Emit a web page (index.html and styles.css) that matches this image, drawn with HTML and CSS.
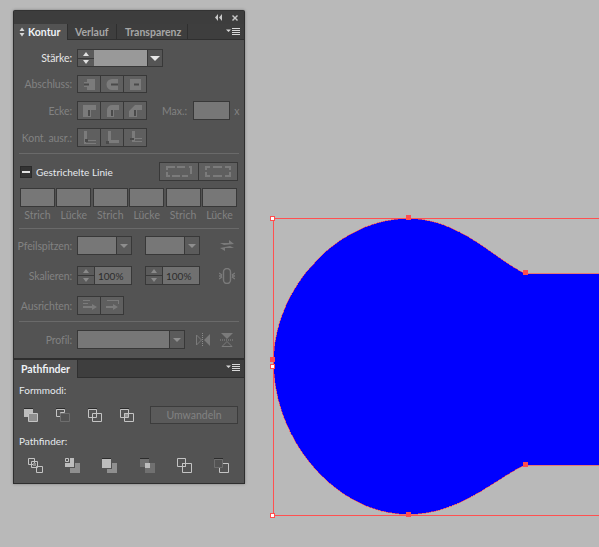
FILE: index.html
```html
<!DOCTYPE html>
<html lang="de">
<head>
    <meta charset="UTF-8">
    <title>Kontur</title>
    <link rel="stylesheet" href="styles.css">
</head>
<body>
    <!-- artboard -->
    <svg class="artboard" width="599" height="547" viewBox="0 0 599 547">
        <path class="bulb" d="M273.5 362C273.500 288 338 218.500 408 218.500C460 218.500 494 259 525 273.500H600V465H525C494 479.500 460 514.500 408 514.500C338 514.500 273.500 442 273.500 362Z"/>
        <path class="bbox" d="M600 218.500H273.500V515.500H600"/>
        <rect class="node" x="406" y="215" width="5" height="5"/>
        <rect class="node" x="523" y="270" width="5" height="5"/>
        <rect class="node" x="523" y="462" width="5" height="5"/>
        <rect class="node" x="406" y="512" width="5" height="5"/>
        <rect class="node" x="270" y="357" width="5" height="5"/>
        <rect class="handle" x="270.5" y="216.5" width="4" height="4"/>
        <rect class="handle" x="270.5" y="364.5" width="4" height="4"/>
        <rect class="handle" x="270.5" y="513.5" width="4" height="4"/>
    </svg>

    <div class="panel">
        <div class="titlebar">
            <svg width="7" height="7" viewBox="0 0 7 7"><path d="M3 0v7L0 3.500zM7 0v7L4 3.500z"/></svg>
            <svg class="close" width="6" height="6" viewBox="0 0 6 6"><path d="M0 1l1-1 2 2 2-2 1 1-2 2 2 2-1 1-2-2-2 2-1-1 2-2z"/></svg>
        </div>

        <div class="tabs">
            <div class="tab active kontur">
                <svg class="updown" width="6" height="10" viewBox="0 0 6 10"><path d="M3 .5L5.500 4H.5zM3 9.500L.5 6h5z"/></svg>
                Kontur
            </div>
            <div class="tab verlauf">Verlauf</div>
            <div class="tab transparenz">Transparenz</div>
            <svg class="menu" width="14" height="8" viewBox="0 0 14 8"><path d="M0 1.500h5L2.500 4z"/><path d="M6 0h8v1H6zM6 2h8v1H6zM6 4h8v1H6zM6 6h8v1H6z"/></svg>
        </div>

        <div class="body">
            <div class="row first">
                <label class="lbl on">Stärke:</label>
                <div class="combo">
                    <div class="spin on"><span class="up"></span><span class="down"></span></div>
                    <div class="field light"></div>
                    <div class="drop on"></div>
                </div>
            </div>

            <div class="row">
                <label class="lbl">Abschluss:</label>
                <div class="group">
                    <div class="cell"><svg width="21" height="17" viewBox="0 0 21 17"><path class="g" d="M8 3h8v11H8v-3H5V6h3z"/><path class="d" d="M5 7.500h5v2H5z"/></svg></div>
                    <div class="cell"><svg width="21" height="17" viewBox="0 0 21 17"><path class="g" d="M10 3h6v11h-6a5.500 5.500 0 0 1 0-11z"/><path class="d" d="M9 7.500h7v2H9z"/></svg></div>
                    <div class="cell"><svg width="21" height="17" viewBox="0 0 21 17"><path class="g" d="M5 3h11v11H5z"/><path class="d" d="M9 7.500h5v2H9z"/></svg></div>
                </div>
            </div>

            <div class="row tall">
                <label class="lbl">Ecke:</label>
                <div class="group">
                    <div class="cell"><svg width="21" height="17" viewBox="0 0 21 17"><path class="g" d="M4 3h13v5h-5v7H4z"/><path class="d" d="M9 8h2v6H9z"/></svg></div>
                    <div class="cell"><svg width="21" height="17" viewBox="0 0 21 17"><path class="g" d="M10 3h7v5h-5v7H5V8a5 5 0 0 1 5-5z"/><path class="d" d="M9 8h2v6H9z"/></svg></div>
                    <div class="cell"><svg width="21" height="17" viewBox="0 0 21 17"><path class="g" d="M10 3h7v5h-5v7H4V9z"/><path class="d" d="M9 8h2v6H9z"/></svg></div>
                </div>
                <label class="lbl-max">Max.:</label>
                <div class="field max"></div>
                <span class="unit">x</span>
            </div>

            <div class="row tall">
                <label class="lbl">Kont. ausr.:</label>
                <div class="group">
                    <div class="cell"><svg width="21" height="17" viewBox="0 0 21 17"><path class="g" d="M5 2h3v9h9v1H7v2h10v1H5z"/><path class="d" d="M6 10h3v3H6z"/></svg></div>
                    <div class="cell"><svg width="21" height="17" viewBox="0 0 21 17"><path class="g" d="M6 2h3v9h8v3H6z"/><path class="d" d="M4 12h3v3H4z"/></svg></div>
                    <div class="cell"><svg width="21" height="17" viewBox="0 0 21 17"><path class="g" d="M7 2h3v7h7v1h-7v2h7v1H7z"/><path class="d" d="M5 9h4v2H5z"/></svg></div>
                </div>
            </div>

            <hr class="sep">

            <div class="row tall dash-row">
                <span class="check"></span>
                <label class="dash-lbl">Gestrichelte Linie</label>
                <div class="group dash-group">
                    <div class="cell wide"><svg width="36" height="17" viewBox="0 0 36 17"><path class="g" d="M6 3h8v2H6zM16 3h8v2h-8zM28 3h3v8h-2V5h-1zM5 3h2v4H5zM5 9h2v5H5zM7 12h2v2H7zM11 12h8v2h-8zM21 12h6v2h-6z"/></svg></div>
                    <div class="cell wide"><svg width="36" height="17" viewBox="0 0 36 17"><path class="g" d="M5 3h5v2H7v2H5zM13 3h9v2h-9zM25 3h6v4h-2V5h-4zM5 9h2v3h3v2H5zM13 12h9v2h-9zM29 9h2v5h-6v-2h4z"/></svg></div>
                </div>
            </div>

            <div class="dash-grid">
                <div class="dash-col"><div class="field"></div><span>Strich</span></div>
                <div class="dash-col"><div class="field"></div><span>Lücke</span></div>
                <div class="dash-col"><div class="field"></div><span>Strich</span></div>
                <div class="dash-col"><div class="field"></div><span>Lücke</span></div>
                <div class="dash-col"><div class="field"></div><span>Strich</span></div>
                <div class="dash-col"><div class="field"></div><span>Lücke</span></div>
            </div>

            <hr class="sep sep-b">

            <div class="row tall arrow-row">
                <label class="lbl">Pfeilspitzen:</label>
                <div class="combo short"><div class="field"></div><div class="drop"></div></div>
                <div class="combo short next"><div class="field"></div><div class="drop"></div></div>
                <svg class="side" width="16" height="14" viewBox="0 0 16 14"><path class="g" d="M1 4h9V1l5 4-10 1zM15 9H6v3L1 9l10-2z"/></svg>
            </div>

            <div class="row tall gap11">
                <label class="lbl">Skalieren:</label>
                <div class="combo short">
                    <div class="spin"><span class="up"></span><span class="down"></span></div>
                    <div class="field value">100%</div>
                </div>
                <div class="combo short next">
                    <div class="spin"><span class="up"></span><span class="down"></span></div>
                    <div class="field value">100%</div>
                </div>
                <svg class="side link" width="16" height="16" viewBox="0 0 16 16"><path class="s" d="M4.500 6V4a3.500 3.500 0 0 1 7 0v2M4.500 10v2a3.500 3.500 0 0 0 7 0v-2M4.500 6v4M11.500 6v4M0 5l3 2M0 11l3-2M16 5l-3 2M16 11l-3-2M0 8h3M13 8h3"/></svg>
            </div>

            <div class="row tall gap11">
                <label class="lbl">Ausrichten:</label>
                <div class="group">
                    <div class="cell"><svg width="21" height="17" viewBox="0 0 21 17"><path class="g" d="M4 3h7v1H4zM4 6h5v1H4zM4 9h9V7l5 3-5 3v-2H4z"/></svg></div>
                    <div class="cell"><svg width="21" height="17" viewBox="0 0 21 17"><path class="g" d="M5 3h12v1H5zM16 4h1v3h-1zM4 9h7V7l5 3-5 3v-2H4z"/></svg></div>
                </div>
            </div>

            <hr class="sep sep-c">

            <div class="row tall profile-row">
                <label class="lbl">Profil:</label>
                <div class="combo long"><div class="field"></div><div class="drop"></div></div>
                <svg class="flip" width="14" height="14" viewBox="0 0 14 14"><path class="s-thin" d="M.5 2l5 5-5 5z"/><path class="g" d="M14 1L8 7l6 6z"/><path class="dots" d="M6.500 0v14"/></svg>
                <svg class="flip flip-b" width="14" height="14" viewBox="0 0 14 14"><path class="g" d="M1 0h12L7 6z"/><path class="s-thin" d="M2 13.500l5-5 5 5z"/><path class="dots" d="M0 7h14"/></svg>
            </div>
        </div>

        <div class="tabs tabs-b">
            <div class="tab active pathfinder">Pathfinder</div>
            <svg class="menu" width="14" height="8" viewBox="0 0 14 8"><path d="M0 1.500h5L2.500 4z"/><path d="M6 0h8v1H6zM6 2h8v1H6zM6 4h8v1H6zM6 6h8v1H6z"/></svg>
        </div>

        <div class="finder">
            <div class="head">Formmodi:</div>
            <div class="modes">
                <div class="mode"><svg width="14" height="14" viewBox="0 0 14 14"><path class="top" d="M0 0h9v1H0z"/><path class="f1" d="M0 1h9v8H0z"/><path class="f2" d="M4 5h9v8H4z"/><path class="o" d="M4.500 5.500h9v8h-9z"/></svg></div>
                <div class="mode"><svg width="14" height="14" viewBox="0 0 14 14"><path class="top" d="M0 0h9v1H0z"/><path class="o" d="M.5 1.500h8v3h-4v4h-4z"/><path class="od" d="M4.500 5.500h9v8h-9z"/></svg></div>
                <div class="mode"><svg width="14" height="14" viewBox="0 0 14 14"><path class="top" d="M0 0h9v1H0z"/><path class="o" d="M.5 1.500h8v8h-8zM4.500 5.500h9v8h-9z"/></svg></div>
                <div class="mode"><svg width="14" height="14" viewBox="0 0 14 14"><path class="top" d="M0 0h9v1H0z"/><path class="f2" d="M4 5h5v4H4z"/><path class="o" d="M.5 1.500h8v8h-8zM4.500 5.500h9v8h-9z"/></svg></div>
                <button class="convert">Umwandeln</button>
            </div>
            <div class="head head-b">Pathfinder:</div>
            <div class="finders">
                <div><svg width="15" height="15" viewBox="0 0 15 15"><path class="o" d="M.5.500h6v6h-6zM3.500 3.500h6v6h-6zM8.500 8.500h6v6h-6z"/><path class="f2" d="M5 5h3v3H5z"/></svg></div>
                <div><svg width="15" height="15" viewBox="0 0 15 15"><path class="f1" d="M5 0h4v5H5zM0 5h9v4H0z"/><path class="f2" d="M10 5h5v10H5v-5h5z"/><path class="o" d="M.5.500h3v3h-3z"/></svg></div>
                <div><svg width="15" height="15" viewBox="0 0 15 15"><path class="f1" d="M0 0h9v10H0z"/><path class="f2" d="M10 5h5v10H5v-4h5z"/><path class="top" d="M0 0h9v1H0z"/></svg></div>
                <div><svg width="15" height="15" viewBox="0 0 15 15"><path class="dim" d="M0 1h9v4H5v4H0z"/><path class="f1" d="M5 5h5v5H5z"/><path class="dim" d="M10 5h5v10H5v-5h5z"/><path class="top" d="M0 0h9v1H0z"/></svg></div>
                <div><svg width="15" height="15" viewBox="0 0 15 15"><path class="o" d="M.5.500h8v8h-8zM5.500 5.500h9v9h-9zM5.500 5.500h3v3h-3z"/></svg></div>
                <div><svg width="15" height="15" viewBox="0 0 15 15"><path class="top" d="M0 0h9v1H0z"/><path class="od" d="M.5 1.500h8v8h-8z"/><path class="o" d="M9 5.500h5.500v9h-9V10"/></svg></div>
            </div>
        </div>
    </div>
</body>
</html>
```

FILE: styles.css
```css
html, body {
    margin: 0;
    padding: 0;
    height: 100%;
    overflow: hidden;
    background-color: #b9b9b9;
}

/* artboard */
.artboard {
    position: absolute;
    left: 0;
    top: 0;
}

.bulb {
    fill: #0000ff;
    stroke: #ff4d4d;
    stroke-width: 0.6;
    shape-rendering: crispEdges;
}

.bbox {
    fill: none;
    stroke: #ff5050;
    stroke-width: 1;
}

.node {
    fill: #ff4d4d;
}

.handle {
    fill: #fff;
    stroke: #ff4d4d;
    stroke-width: 1;
}

/* floating panel */
.panel {
    position: absolute;
    left: 13px;
    top: 10px;
    width: 232px;
    height: 474px;
    box-sizing: border-box;
    background-color: #535353;
    border: 1px solid #2e2e2e;
    border-top-color: #333;
    border-radius: 2px 2px 0 0;
    box-shadow: 0 0 3px rgba(0, 0, 0, 0.35);
    font-family: Lato, "Open Sans", sans-serif;
    font-size: 10.5px;
    color: #828282;
}

.titlebar {
    height: 13px;
    background-color: #3d3d3d;
    display: flex;
    align-items: center;
    justify-content: flex-end;
    gap: 10px;
    padding-right: 6px;
}

.titlebar svg {
    fill: #c8c8c8;
}

.tabs {
    height: 15px;
    background-color: #3e3e3e;
    border-bottom: 1px solid #2f2f2f;
    display: flex;
    align-items: stretch;
    position: relative;
}

.tab {
    display: flex;
    align-items: center;
    box-sizing: border-box;
    border-right: 1px solid #2f2f2f;
    font-weight: 700;
    color: #a6a6a6;
}

.tab.active {
    background-color: #535353;
    color: #eef2f6;
    margin-bottom: -1px;
}

.kontur {
    width: 54px;
    padding-left: 5px;
}

.verlauf {
    width: 49px;
    padding-left: 7px;
}

.transparenz {
    width: 71px;
    padding-left: 8px;
}

.pathfinder {
    width: 64px;
    padding-left: 7px;
}

.updown {
    fill: #d8d8d8;
    margin-right: 3px;
    flex-shrink: 0;
}

.menu {
    position: absolute;
    right: 4px;
    top: 4px;
    fill: #d8d8d8;
}

.body {
    height: 318px;
    box-sizing: border-box;
    padding-top: 9px;
}

.row {
    display: flex;
    align-items: center;
    height: 18px;
    margin-top: 8px;
}

.row.first {
    margin-top: 0;
}

.row.tall {
    height: 19px;
}

.row.gap11 {
    margin-top: 11px;
}

.lbl {
    width: 58px;
    margin-right: 5px;
    text-align: right;
    white-space: nowrap;
    letter-spacing: -0.1px;
}

.lbl.on {
    color: #e6e6e6;
}

/* inputs */
.field {
    box-sizing: border-box;
    background-color: #777;
    border: 1px solid #383838;
}

.field.light {
    flex: 1;
    background-color: #999;
    border-width: 1px 0;
}

.field.max {
    width: 37px;
    height: 19px;
    margin-left: 6px;
}

.unit {
    margin-left: 4px;
}

.lbl-max {
    margin-left: 15px;
}

.combo {
    display: flex;
    width: 86px;
    height: 18px;
    box-sizing: border-box;
}

.combo.short {
    width: 55px;
    height: 19px;
}

.combo.short.next {
    margin-left: 13px;
}

.combo.long {
    width: 108px;
    height: 19px;
}

.combo .field:not(.light) {
    flex: 1;
    border-right: 0;
}

.drop {
    width: 16px;
    box-sizing: border-box;
    background-color: #5b5b5b;
    border: 1px solid #383838;
    display: flex;
    align-items: center;
    justify-content: center;
}

.drop::after {
    content: "";
    border-style: solid;
    border-width: 4px 4px 0;
    border-color: #8e8e8e transparent transparent;
}

.drop.on {
    background-color: #555;
}

.drop.on::after {
    border-width: 5px 5px 0;
    border-color: #e8e8e8 transparent transparent;
}

.spin {
    width: 17px;
    box-sizing: border-box;
    border: 1px solid #383838;
    border-right: 0;
    background-color: #5b5b5b;
    display: flex;
    flex-direction: column;
    flex-shrink: 0;
}

.spin span {
    flex: 1;
    display: flex;
    align-items: center;
    justify-content: center;
}

.spin .up {
    border-bottom: 1px solid #383838;
}

.spin .up::after {
    content: "";
    border-style: solid;
    border-width: 0 3.5px 4px;
    border-color: transparent transparent #8a8a8a;
}

.spin .down::after {
    content: "";
    border-style: solid;
    border-width: 4px 3.5px 0;
    border-color: #8a8a8a transparent transparent;
}

.spin.on .up::after {
    border-bottom-color: #e0e0e0;
}

.spin.on .down::after {
    border-top-color: #e0e0e0;
}

.combo .field.value {
    background-color: #707070;
    color: #2c2c2c;
    display: flex;
    align-items: center;
    padding: 1px 0 0 3px;
    border-right: 1px solid #383838;
    font-size: 10px;
}

/* icon button strip */
.group {
    display: flex;
    border: 1px solid #383838;
    height: 100%;
    box-sizing: border-box;
    background-color: #383838;
    gap: 1px;
}

.cell {
    width: 22px;
    background-color: #5f5f5f;
    display: flex;
    align-items: center;
    justify-content: center;
}

.cell.wide {
    width: 38px;
}

.g {
    fill: #7b7b7b;
}

.d {
    fill: #4a4a4a;
}

.s {
    fill: none;
    stroke: #7b7b7b;
    stroke-width: 1.4;
}

.s-thin {
    fill: none;
    stroke: #7b7b7b;
    stroke-width: 1;
}

.dots {
    fill: none;
    stroke: #8a8a8a;
    stroke-width: 1;
    stroke-dasharray: 1 1;
}

.sep {
    margin: 6px 5px 0;
    height: 1px;
    border: 0;
    background-color: #6a6a6a;
}

.sep-b {
    margin-top: 5px;
}

.dash-row {
    margin-top: 8px;
}

.arrow-row {
    margin-top: 7px;
}

.profile-row {
    margin-top: 8px;
}

.check {
    width: 12px;
    height: 12px;
    box-sizing: border-box;
    margin-left: 6px;
    background-color: #333;
    border: 1px solid #2a2a2a;
    display: flex;
    align-items: center;
    justify-content: center;
}

.check::after {
    content: "";
    width: 8px;
    height: 2px;
    background-color: #e0e0e0;
}

.dash-lbl {
    margin-left: 4px;
    color: #e6eaee;
    font-size: 10px;
}

.dash-group {
    margin-left: auto;
    margin-right: 6px;
}

.dash-grid {
    display: grid;
    grid-template-columns: repeat(6, 35px);
    column-gap: 1.4px;
    margin: 7px 0 0 6px;
}

.dash-col {
    text-align: center;
    line-height: 16px;
}

.dash-col .field {
    height: 19px;
}

.side {
    margin-left: 19px;
}

.flip {
    margin-left: 11px;
}

.flip-b {
    margin-left: 10px;
}

/* pathfinder */
.tabs-b {
    height: 17px;
    border-top: 2px solid #2e2e2e;
}

.finder {
    padding: 5px 0 0 5px;
}

.head {
    color: #e6eaee;
    line-height: 14px;
    font-size: 10px;
}

.head-b {
    margin-top: 10px;
}

.modes {
    display: flex;
    align-items: center;
    height: 18px;
    margin: 9px 0 0 -4px;
}

.mode {
    width: 32px;
    display: flex;
    justify-content: center;
    height: 14px;
}

.convert {
    width: 88px;
    height: 18px;
    box-sizing: border-box;
    margin-left: 7px;
    padding: 0;
    background-color: #5a5a5a;
    border: 1px solid #3c3c3c;
    color: #828282;
    font-family: Lato, "Open Sans", sans-serif;
    font-size: 10.5px;
}

.finders {
    display: grid;
    grid-template-columns: repeat(6, 37.2px);
    justify-items: center;
    margin: 10px 0 0 -2px;
}

.finders div {
    height: 15px;
}

.top {
    fill: #2c2c2c;
}

.f1 {
    fill: #bdbdbd;
}

.f2 {
    fill: #8f8f8f;
}

.dim {
    fill: #707070;
}

.o {
    fill: none;
    stroke: #c4c4c4;
    stroke-width: 1;
}

.od {
    fill: none;
    stroke: #6e6e6e;
    stroke-width: 1;
}
```
